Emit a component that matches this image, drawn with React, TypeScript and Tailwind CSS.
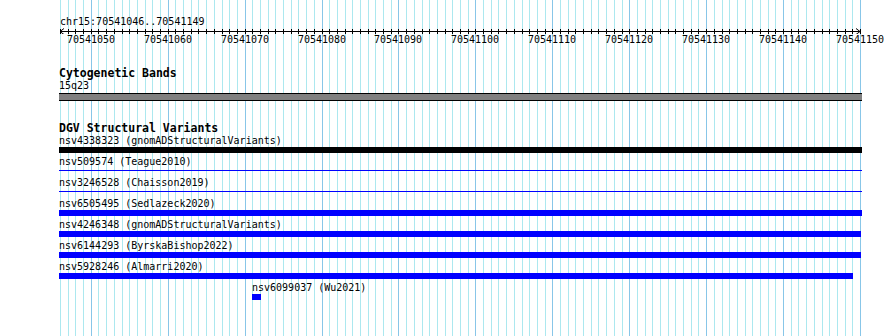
import React from 'react';

const START = 70541046;
const BASES = 104;
const X0 = 60;
const PX = 800 / BASES;
const baseX = (i: number) => Math.round(X0 + i * PX);

type Row = {
  label: string;
  kind: 'bar' | 'line';
  barClass: string;
  offsetClass?: string;
};

const rows: Row[] = [
  { label: 'nsv4338323 (gnomADStructuralVariants)', kind: 'bar', barClass: 'w-[803px] bg-black' },
  { label: 'nsv509574 (Teague2010)', kind: 'line', barClass: 'w-[803px] bg-[#0000ff]' },
  { label: 'nsv3246528 (Chaisson2019)', kind: 'line', barClass: 'w-[803px] bg-[#0000ff]' },
  { label: 'nsv6505495 (Sedlazeck2020)', kind: 'bar', barClass: 'w-[803px] bg-[#0000ff]' },
  { label: 'nsv4246348 (gnomADStructuralVariants)', kind: 'bar', barClass: 'w-[802px] bg-[#0000ff]' },
  { label: 'nsv6144293 (ByrskaBishop2022)', kind: 'bar', barClass: 'w-[802px] bg-[#0000ff]' },
  { label: 'nsv5928246 (Almarri2020)', kind: 'bar', barClass: 'w-[794px] bg-[#0000ff]' },
  { label: 'nsv6099037 (Wu2021)', kind: 'bar', barClass: 'w-[9px] bg-[#0000ff]', offsetClass: 'ml-[193px]' },
];

const GridLines = () => (
  <svg className="absolute inset-0" width={890} height={336} shapeRendering="crispEdges">
    {Array.from({ length: BASES + 1 }, (_, i) => {
      const major = (START + i) % 10 === 0;
      const x = baseX(i) + 0.5;
      return (
        <line key={i} x1={x} x2={x} y1={0} y2={336} stroke={major ? '#88c6e8' : '#ace8ef'} strokeWidth={1} />
      );
    })}
  </svg>
);

const Ruler = () => (
  <svg width={831} height={6} className="block" shapeRendering="crispEdges">
    <line x1={1} x2={801} y1={3.5} y2={3.5} stroke="#000" />
    {Array.from({ length: BASES + 1 }, (_, i) => {
      const x = baseX(i) - 59 + 0.5;
      return <line key={i} x1={x} x2={x} y1={1} y2={6} stroke="#000" />;
    })}
    <polyline points="5,0.5 1,3.5 5,6.5" fill="none" stroke="#000" shapeRendering="auto" />
    <polyline points="797,0.5 801,3.5 797,6.5" fill="none" stroke="#000" shapeRendering="auto" />
  </svg>
);

export default function App() {
  const majors = Array.from({ length: BASES + 1 }, (_, i) => i).filter((i) => (START + i) % 10 === 0);

  return (
    <div className="relative w-[890px] h-[336px] overflow-hidden bg-white text-black font-['DejaVu_Sans_Mono',monospace]">
      <GridLines />

      <div className="relative pl-[59px] pt-[16px]">
        {/* location + ruler */}
        <div className="pl-[1px] text-[10px] leading-[12px] whitespace-nowrap">chr15:70541046..70541149</div>
        <Ruler />
        <div className="relative h-[12px] text-[10px] leading-[12px]">
          {majors.map((i) => (
            <div
              key={i}
              className="absolute top-0 -translate-x-1/2 whitespace-nowrap"
              style={{ left: baseX(i) - 59 }}
            >
              {START + i}
            </div>
          ))}
        </div>

        {/* cytobands */}
        <div className="mt-[20px] text-[11.5px] font-bold leading-[14px] whitespace-nowrap">Cytogenetic Bands</div>
        <div className="text-[10px] leading-[12px]">15q23</div>
        <div className="mt-[1px] h-[8px] w-[803px] border-y border-black bg-[#808080]" />

        {/* structural variants */}
        <div className="mt-[20px] text-[11.5px] font-bold leading-[14px] whitespace-nowrap">DGV Structural Variants</div>
        <div className="flex flex-col gap-[3px]">
          {rows.map((r) => (
            <div key={r.label} className={r.offsetClass}>
              <div className="text-[10px] leading-[12px] whitespace-nowrap">{r.label}</div>
              {r.kind === 'bar' ? (
                <div className={`h-[6px] ${r.barClass}`} />
              ) : (
                <div className="h-[6px] pt-[2px]">
                  <div className={`h-px ${r.barClass}`} />
                </div>
              )}
            </div>
          ))}
        </div>
      </div>
    </div>
  );
}
